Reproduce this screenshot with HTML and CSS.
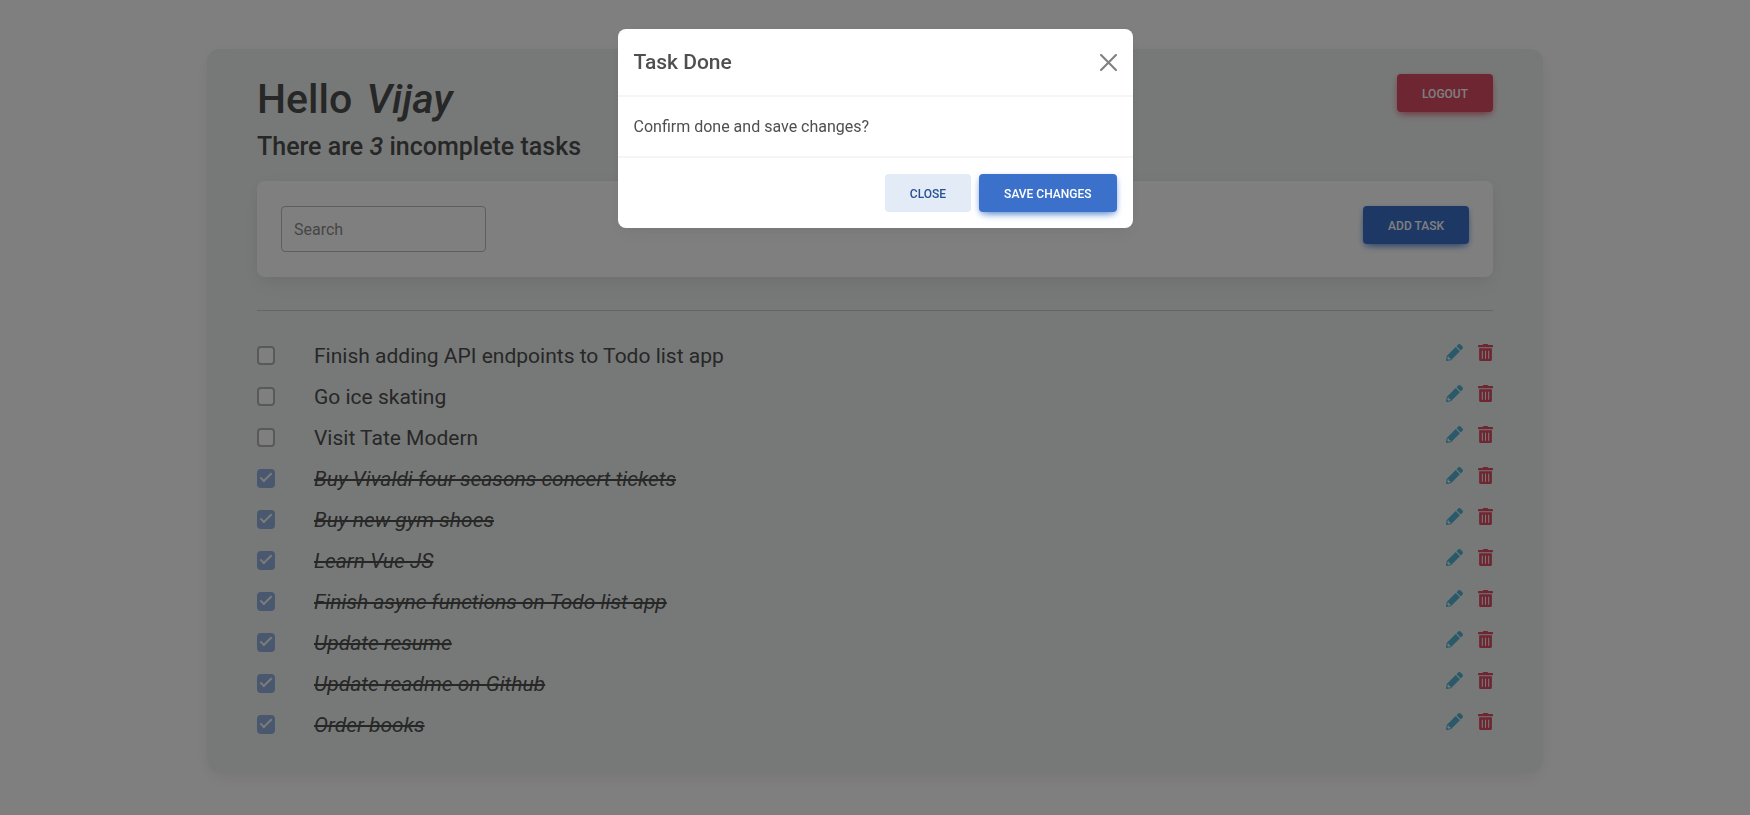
FILE: index.html
```html
<!DOCTYPE html>
<html lang="en">
<head>
<meta charset="utf-8">
<meta name="viewport" content="width=device-width, initial-scale=1">
<title>Todo list</title>
<link rel="stylesheet" href="styles.css">
</head>
<body>
<svg class="sprite" aria-hidden="true">
  <symbol id="pencil" viewBox="0 0 512 512"><path d="M497.900 142.100l-46.100 46.100c-4.700 4.700-12.300 4.700-17 0l-111-111c-4.700-4.700-4.700-12.300 0-17l46.100-46.100c18.700-18.700 49.100-18.700 67.900 0l60.100 60.100c18.800 18.700 18.800 49.100 0 67.900zM284.200 99.800L21.600 362.400.400 483.900c-2.900 16.400 11.400 30.600 27.800 27.800l121.500-21.300 262.600-262.600c4.700-4.700 4.700-12.300 0-17l-111-111c-4.800-4.700-12.400-4.700-17.100 0zM88 424h48v36.300l-64.500 11.300-31.100-31.100L51.700 376H88v48z"/></symbol>
  <symbol id="trash" viewBox="0 0 448 512"><path d="M32 464a48 48 0 0 0 48 48h288a48 48 0 0 0 48-48V128H32zm272-256a16 16 0 0 1 32 0v224a16 16 0 0 1-32 0zm-96 0a16 16 0 0 1 32 0v224a16 16 0 0 1-32 0zm-96 0a16 16 0 0 1 32 0v224a16 16 0 0 1-32 0zM432 32H312l-9.400-18.700A24 24 0 0 0 281.100 0H166.800a23.700 23.700 0 0 0-21.400 13.300L136 32H16A16 16 0 0 0 0 48v32a16 16 0 0 0 16 16h416a16 16 0 0 0 16-16V48a16 16 0 0 0-16-16z"/></symbol>
</svg>

<main class="board">
  <header class="board-header">
    <div>
      <h1 class="greeting">Hello <em>Vijay</em></h1>
      <h2 class="summary">There are <em>3</em> incomplete tasks</h2>
    </div>
    <button class="btn btn-danger" type="button">Logout</button>
  </header>

  <section class="toolbar">
    <input class="search" type="search" placeholder="Search" aria-label="Search">
    <button class="btn btn-primary" type="button">Add task</button>
  </section>

  <hr class="divider">

  <ul class="tasks">
    <li class="task"><input class="check" type="checkbox" id="t1"><label class="task-name" for="t1">Finish adding API endpoints to Todo list app</label><button class="icon-btn edit" type="button" aria-label="Edit"><svg class="icon"><use href="#pencil"/></svg></button><button class="icon-btn delete" type="button" aria-label="Delete"><svg class="icon"><use href="#trash"/></svg></button></li>
    <li class="task"><input class="check" type="checkbox" id="t2"><label class="task-name" for="t2">Go ice skating</label><button class="icon-btn edit" type="button" aria-label="Edit"><svg class="icon"><use href="#pencil"/></svg></button><button class="icon-btn delete" type="button" aria-label="Delete"><svg class="icon"><use href="#trash"/></svg></button></li>
    <li class="task"><input class="check" type="checkbox" id="t3"><label class="task-name" for="t3">Visit Tate Modern</label><button class="icon-btn edit" type="button" aria-label="Edit"><svg class="icon"><use href="#pencil"/></svg></button><button class="icon-btn delete" type="button" aria-label="Delete"><svg class="icon"><use href="#trash"/></svg></button></li>
    <li class="task done"><input class="check" type="checkbox" id="t4" checked disabled><label class="task-name" for="t4">Buy Vivaldi four seasons concert tickets</label><button class="icon-btn edit" type="button" aria-label="Edit"><svg class="icon"><use href="#pencil"/></svg></button><button class="icon-btn delete" type="button" aria-label="Delete"><svg class="icon"><use href="#trash"/></svg></button></li>
    <li class="task done"><input class="check" type="checkbox" id="t5" checked disabled><label class="task-name" for="t5">Buy new gym shoes</label><button class="icon-btn edit" type="button" aria-label="Edit"><svg class="icon"><use href="#pencil"/></svg></button><button class="icon-btn delete" type="button" aria-label="Delete"><svg class="icon"><use href="#trash"/></svg></button></li>
    <li class="task done"><input class="check" type="checkbox" id="t6" checked disabled><label class="task-name" for="t6">Learn Vue JS</label><button class="icon-btn edit" type="button" aria-label="Edit"><svg class="icon"><use href="#pencil"/></svg></button><button class="icon-btn delete" type="button" aria-label="Delete"><svg class="icon"><use href="#trash"/></svg></button></li>
    <li class="task done"><input class="check" type="checkbox" id="t7" checked disabled><label class="task-name" for="t7">Finish async functions on Todo list app</label><button class="icon-btn edit" type="button" aria-label="Edit"><svg class="icon"><use href="#pencil"/></svg></button><button class="icon-btn delete" type="button" aria-label="Delete"><svg class="icon"><use href="#trash"/></svg></button></li>
    <li class="task done"><input class="check" type="checkbox" id="t8" checked disabled><label class="task-name" for="t8">Update resume</label><button class="icon-btn edit" type="button" aria-label="Edit"><svg class="icon"><use href="#pencil"/></svg></button><button class="icon-btn delete" type="button" aria-label="Delete"><svg class="icon"><use href="#trash"/></svg></button></li>
    <li class="task done"><input class="check" type="checkbox" id="t9" checked disabled><label class="task-name" for="t9">Update readme on Github</label><button class="icon-btn edit" type="button" aria-label="Edit"><svg class="icon"><use href="#pencil"/></svg></button><button class="icon-btn delete" type="button" aria-label="Delete"><svg class="icon"><use href="#trash"/></svg></button></li>
    <li class="task done"><input class="check" type="checkbox" id="t10" checked disabled><label class="task-name" for="t10">Order books</label><button class="icon-btn edit" type="button" aria-label="Edit"><svg class="icon"><use href="#pencil"/></svg></button><button class="icon-btn delete" type="button" aria-label="Delete"><svg class="icon"><use href="#trash"/></svg></button></li>
  </ul>
</main>

<div class="backdrop">
  <div class="modal" role="dialog" aria-modal="true" aria-labelledby="modal-title">
    <div class="modal-header">
      <h3 class="modal-title" id="modal-title">Task Done</h3>
      <button class="close" type="button" aria-label="Close"><svg class="close-icon" viewBox="0 0 16 16"><path d="M1 1l14 14M15 1L1 15"/></svg></button>
    </div>
    <div class="modal-body">Confirm done and save changes?</div>
    <div class="modal-footer">
      <button class="btn btn-light" type="button">Close</button>
      <button class="btn btn-primary" type="button">Save changes</button>
    </div>
  </div>
</div>
</body>
</html>
```
FILE: styles.css
```css
*, *::before, *::after { box-sizing: border-box; }

body {
  margin: 0;
  padding: 49px 24px;
  background: #fff;
  color: #4f4f4f;
  font-family: Roboto, "Liberation Sans", sans-serif;
  font-size: 16px;
  line-height: 26px;
}

.sprite { position: absolute; width: 0; height: 0; }

.board {
  max-width: 1336px;
  margin: 0 auto;
  padding: 25px 50px 26px;
  border-radius: 12px;
  background: #eef2f0;
  box-shadow: 0 2px 15px -3px rgba(0, 0, 0, .07), 0 10px 20px -2px rgba(0, 0, 0, .04);
}

.board-header {
  display: flex;
  align-items: flex-start;
  justify-content: space-between;
}

.greeting, .summary, .modal-title { margin: 0; font-weight: 500; }
.greeting { font-size: 41px; line-height: 50px; }
.greeting em { margin-left: 4px; }
.summary { margin: 8px 0 20px; font-size: 25px; line-height: 29px; }

.btn {
  height: 38px;
  padding: 2px 25px 0;
  border: 0;
  border-radius: 4px;
  font: 500 12px/20px Roboto, "Liberation Sans", sans-serif;
  text-transform: uppercase;
}
.btn-primary { background: #3b71ca; color: #fff; box-shadow: 0 4px 9px -4px #3b71ca, 0 2px 5px rgba(59, 113, 202, .3); }
.btn-danger { background: #dc4c64; color: #fff; box-shadow: 0 4px 9px -4px #dc4c64, 0 2px 5px rgba(220, 76, 100, .3); }
.btn-light { background: #e3ebf7; color: #285192; }

.toolbar {
  display: flex;
  align-items: flex-start;
  justify-content: space-between;
  padding: 25px 24px;
  border-radius: 8px;
  background: #fff;
  box-shadow: 0 2px 15px -3px rgba(0, 0, 0, .07), 0 10px 20px -2px rgba(0, 0, 0, .04);
}

.search {
  width: 205px;
  height: 46px;
  padding: 0 12px;
  border: 1px solid #bdbdbd;
  border-radius: 4px;
  background: #fff;
  font: 16px/26px Roboto, "Liberation Sans", sans-serif;
  appearance: none;
}
.search::placeholder { color: #8c8c8c; opacity: 1; }

.divider { height: 1px; margin: 33px 0 25px; border: 0; background: #c8cccc; }

.tasks { margin: 0; padding: 0; list-style: none; }

.task { display: flex; align-items: center; height: 41px; }
.task-name { flex: 1; margin-left: 39px; font-size: 21px; line-height: 33px; }
.done .task-name { font-style: italic; text-decoration: line-through; }

.check {
  position: relative;
  width: 18px;
  height: 19px;
  margin: 0 0 2px;
  border: 2px solid #b0b3b2;
  border-radius: 4px;
  appearance: none;
  background: #fff;
}
.check:checked { border-color: #3b71ca; background: #3b71ca; opacity: .5; }
.check:checked::after {
  position: absolute;
  top: -1px;
  left: 4px;
  width: 6px;
  height: 12px;
  border: solid #fff;
  border-width: 0 2px 2px 0;
  content: "";
  transform: rotate(45deg);
}

.icon-btn { display: flex; height: 26px; padding: 0; border: 0; background: none; }
.icon { width: 17px; height: 17px; fill: currentColor; }
.edit { margin-right: 15px; color: #54b4d3; }
.delete { color: #dc4c64; }
.delete .icon { width: 15px; }

.backdrop {
  position: fixed;
  inset: 0;
  padding: 29px 16px;
  background: rgba(0, 0, 0, .5);
}

.modal {
  max-width: 515px;
  margin: 0 auto;
  border-radius: 8px;
  background: #fff;
  box-shadow: 0 2px 15px -3px rgba(0, 0, 0, .07), 0 10px 20px -2px rgba(0, 0, 0, .04);
}
.modal-header {
  display: flex;
  align-items: center;
  justify-content: space-between;
  padding: 17px 16px;
  border-bottom: 2px solid #f5f5f5;
}
.modal-title { font-size: 21px; line-height: 32px; }
.close { display: flex; padding: 0; border: 0; background: none; }
.close-icon { width: 17px; height: 17px; fill: none; stroke: #808080; stroke-width: 2; stroke-linecap: round; }
.modal-body { padding: 17px 16px 16px; }
.modal-footer {
  display: flex;
  justify-content: flex-end;
  gap: 8px;
  padding: 16px;
  border-top: 2px solid #f5f5f5;
}
```
